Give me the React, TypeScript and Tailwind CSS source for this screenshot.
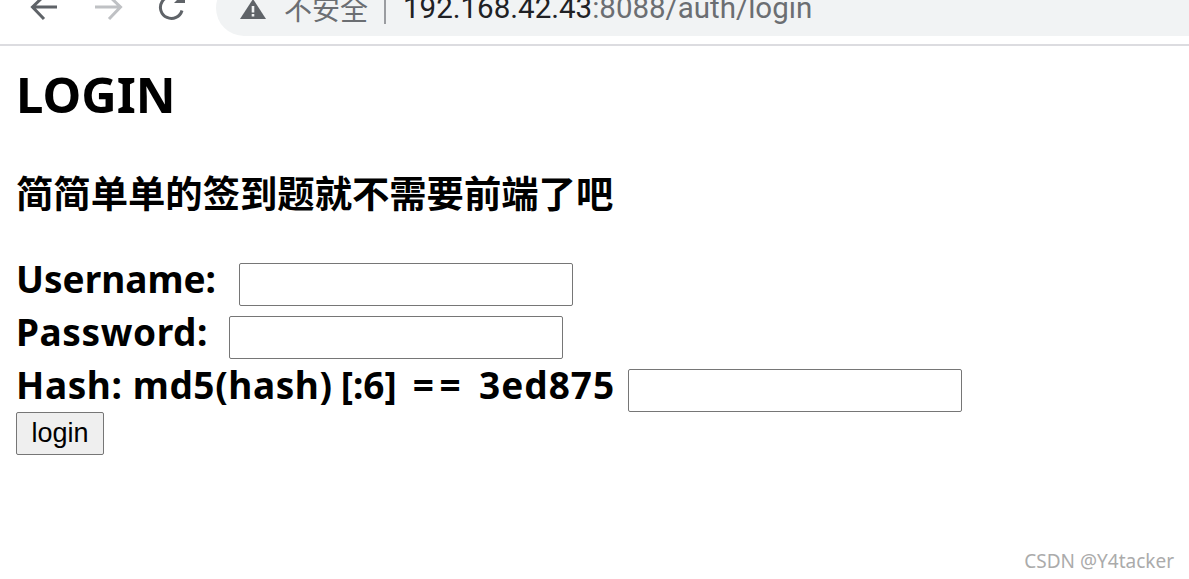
import type { ReactNode } from 'react';

const page = 'font-["Noto_Sans","Noto_Sans_CJK_SC",sans-serif]';

function Toolbar() {
  return (
    <div className="flex h-[46px] shrink-0 items-start overflow-hidden border-b-2 border-[#dcdce0] bg-white">
      {/* back */}
      <svg className="ml-[30px] mt-[-8px] shrink-0" width="29" height="30" viewBox="0 0 29 30" fill="none" stroke="#5f6368" strokeWidth="3">
        <path d="M27 15H3M14 4 2.500 15 14 27" />
      </svg>
      {/* forward */}
      <svg className="ml-[35px] mt-[-8px] shrink-0" width="29" height="30" viewBox="0 0 29 30" fill="none" stroke="#bfc1c4" strokeWidth="3">
        <path d="M1 15h25M15 4l11.500 11L15 27" />
      </svg>
      {/* reload */}
      <svg className="ml-[34px] mt-[-8px] shrink-0" width="30" height="30" viewBox="0 0 30 30" fill="none">
        <path d="M25 18.500A11 11 0 1 1 21.500 7" stroke="#5f6368" strokeWidth="3" />
        <path d="M17 11h11V0z" fill="#5f6368" />
      </svg>
      <div className="ml-[29px] mt-[-20px] flex h-[56px] flex-1 items-center rounded-l-[28px] bg-[#f1f3f4] pl-[24px]">
        <svg className="mt-[3px] shrink-0" width="26" height="22" viewBox="0 0 26 22">
          <path d="M13 0 26 20H0z" fill="#5f6368" />
          <path d="M11.700 7h2.600v6.500h-2.600zM11.700 15h2.600v2.600h-2.600z" fill="#f1f3f4" />
        </svg>
        <span className={`${page} ml-[18px] mt-[2px] text-[28px] leading-none whitespace-nowrap text-[#6b6e72]`}>不安全</span>
        <span className="ml-[16px] mt-[8px] h-[24px] w-[2px] bg-[#9a9ca0]" />
        <span className="ml-[17px] mt-[1px] font-['Roboto',sans-serif] text-[29.500px] leading-none whitespace-nowrap text-[#202124]">
          192.168.42.43<span className="text-[#6b6e72]">:8088/auth/login</span>
        </span>
      </div>
    </div>
  );
}

function Field({ label, spacing }: { label: ReactNode; spacing: string }) {
  return (
    <div className="flex h-[53px] items-center">
      <label className={`mb-[12px] text-[37px] leading-none font-bold whitespace-nowrap text-black ${spacing}`}>{label}</label>
      <input className="h-[43px] w-[334px] rounded-[2px] border border-[#767676] bg-white" type="text" />
    </div>
  );
}

export default function App() {
  return (
    <div className={`${page} relative flex h-[579px] w-[1189px] flex-col overflow-hidden bg-white`}>
      <Toolbar />
      <div className="flex flex-col pl-4">
        <h1 className="mt-[18px] text-[49px] leading-[60px] font-bold text-black">LOGIN</h1>
        <h3 className="mt-[48px] text-[37.330px] leading-[44px] font-bold text-black">简简单单的签到题就不需要前端了吧</h3>
        <form className="mt-[42px] flex flex-col">
          <Field label="Username:" spacing="mr-[23px]" />
          <Field label="Password:" spacing="mr-[21px] tracking-[0.6px]" />
          <Field
            label={
              <>
                Hash: md5(hash)<span className="ml-[8px] tracking-normal">[:6]</span>
                <span className="ml-[16px] tracking-[5.500px]">==</span>
                <span className="ml-[13px] tracking-[1px]">3ed875</span>
              </>
            }
            spacing="mr-[13px] tracking-[0.6px]"
          />
          <button className="mt-[-5px] h-[43px] w-[88px] rounded-[2px] border border-[#767676] bg-[#efefef] font-['Liberation_Sans',sans-serif] text-[27px] text-black" type="button">
            login
          </button>
        </form>
      </div>
      <span className="absolute right-[15px] bottom-[8px] text-[19px] leading-none text-[#ababab]">CSDN @Y4tacker</span>
    </div>
  );
}
